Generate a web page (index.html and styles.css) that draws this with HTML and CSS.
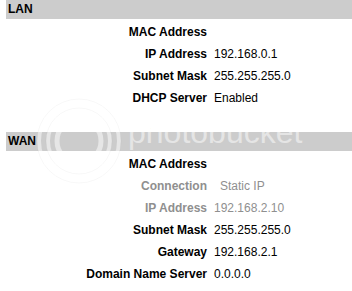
FILE: index.html
```html
<!DOCTYPE html>
<html lang="en">
<head>
    <meta charset="UTF-8">
    <title>Status</title>
    <link rel="stylesheet" href="styles.css">
</head>
<body>
    <div class="section">
        <h2 class="section-title">LAN</h2>
        <div class="info-row"><span class="info-label">MAC Address</span><span class="info-value"></span></div>
        <div class="info-row"><span class="info-label">IP Address</span><span class="info-value">192.168.0.1</span></div>
        <div class="info-row"><span class="info-label">Subnet Mask</span><span class="info-value">255.255.255.0</span></div>
        <div class="info-row"><span class="info-label">DHCP Server</span><span class="info-value">Enabled</span></div>
    </div>

    <div class="section wan">
        <h2 class="section-title">WAN</h2>
        <div class="info-row"><span class="info-label">MAC Address</span><span class="info-value"></span></div>
        <div class="info-row faded"><span class="info-label">Connection</span><span class="info-value indent">Static IP</span></div>
        <div class="info-row faded"><span class="info-label">IP Address</span><span class="info-value">192.168.2.10</span></div>
        <div class="info-row"><span class="info-label">Subnet Mask</span><span class="info-value">255.255.255.0</span></div>
        <div class="info-row"><span class="info-label">Gateway</span><span class="info-value">192.168.2.1</span></div>
        <div class="info-row"><span class="info-label">Domain Name Server</span><span class="info-value">0.0.0.0</span></div>
    </div>

    <!-- watermark over the screenshot -->
    <svg class="watermark-rings" width="90" height="90" viewBox="0 0 90 90">
        <circle cx="45" cy="45" r="40" fill="none" stroke="rgba(255,255,255,0.5)" stroke-width="4"/>
        <circle cx="45" cy="45" r="31" fill="none" stroke="rgba(255,255,255,0.5)" stroke-width="4"/>
        <circle cx="45" cy="45" r="22" fill="none" stroke="rgba(255,255,255,0.5)" stroke-width="5"/>
        <circle cx="45" cy="45" r="42" fill="none" stroke="rgba(0,0,0,0.03)" stroke-width="1"/>
        <circle cx="45" cy="45" r="33" fill="none" stroke="rgba(0,0,0,0.03)" stroke-width="1"/>
    </svg>
    <span class="watermark-text">photobucket</span>
</body>
</html>
```

FILE: styles.css
```css
body {
    font-family: 'Liberation Sans', Arial, sans-serif;
    font-size: 12px;
    color: #000;
    background-color: #fff;
    margin: 0 0 0 6px;
    position: relative;
}

.section-title {
    margin: 0 0 2px 0;
    padding-left: 2px;
    height: 19px;
    line-height: 19px;
    font-size: 12px;
    font-weight: bold;
    background-color: #cccccc;
}

.wan {
    margin-top: 23px;
}

.info-row {
    display: grid;
    grid-template-columns: 201px 1fr;
    column-gap: 7px;
    height: 22px;
    line-height: 22px;
}

.info-label {
    text-align: right;
    font-weight: bold;
}

.info-value.indent {
    padding-left: 6px;
}

.info-row.faded {
    color: #8f8f8f;
}

.watermark-rings {
    position: absolute;
    left: 28px;
    top: 96px;
    pointer-events: none;
}

.watermark-text {
    position: absolute;
    left: 122px;
    top: 116px;
    font-family: 'Liberation Sans', Arial, sans-serif;
    font-size: 32px;
    line-height: 32px;
    color: rgba(255, 255, 255, 0.5);
    -webkit-text-stroke: 0.5px rgba(0, 0, 0, 0.04);
    pointer-events: none;
}
```
